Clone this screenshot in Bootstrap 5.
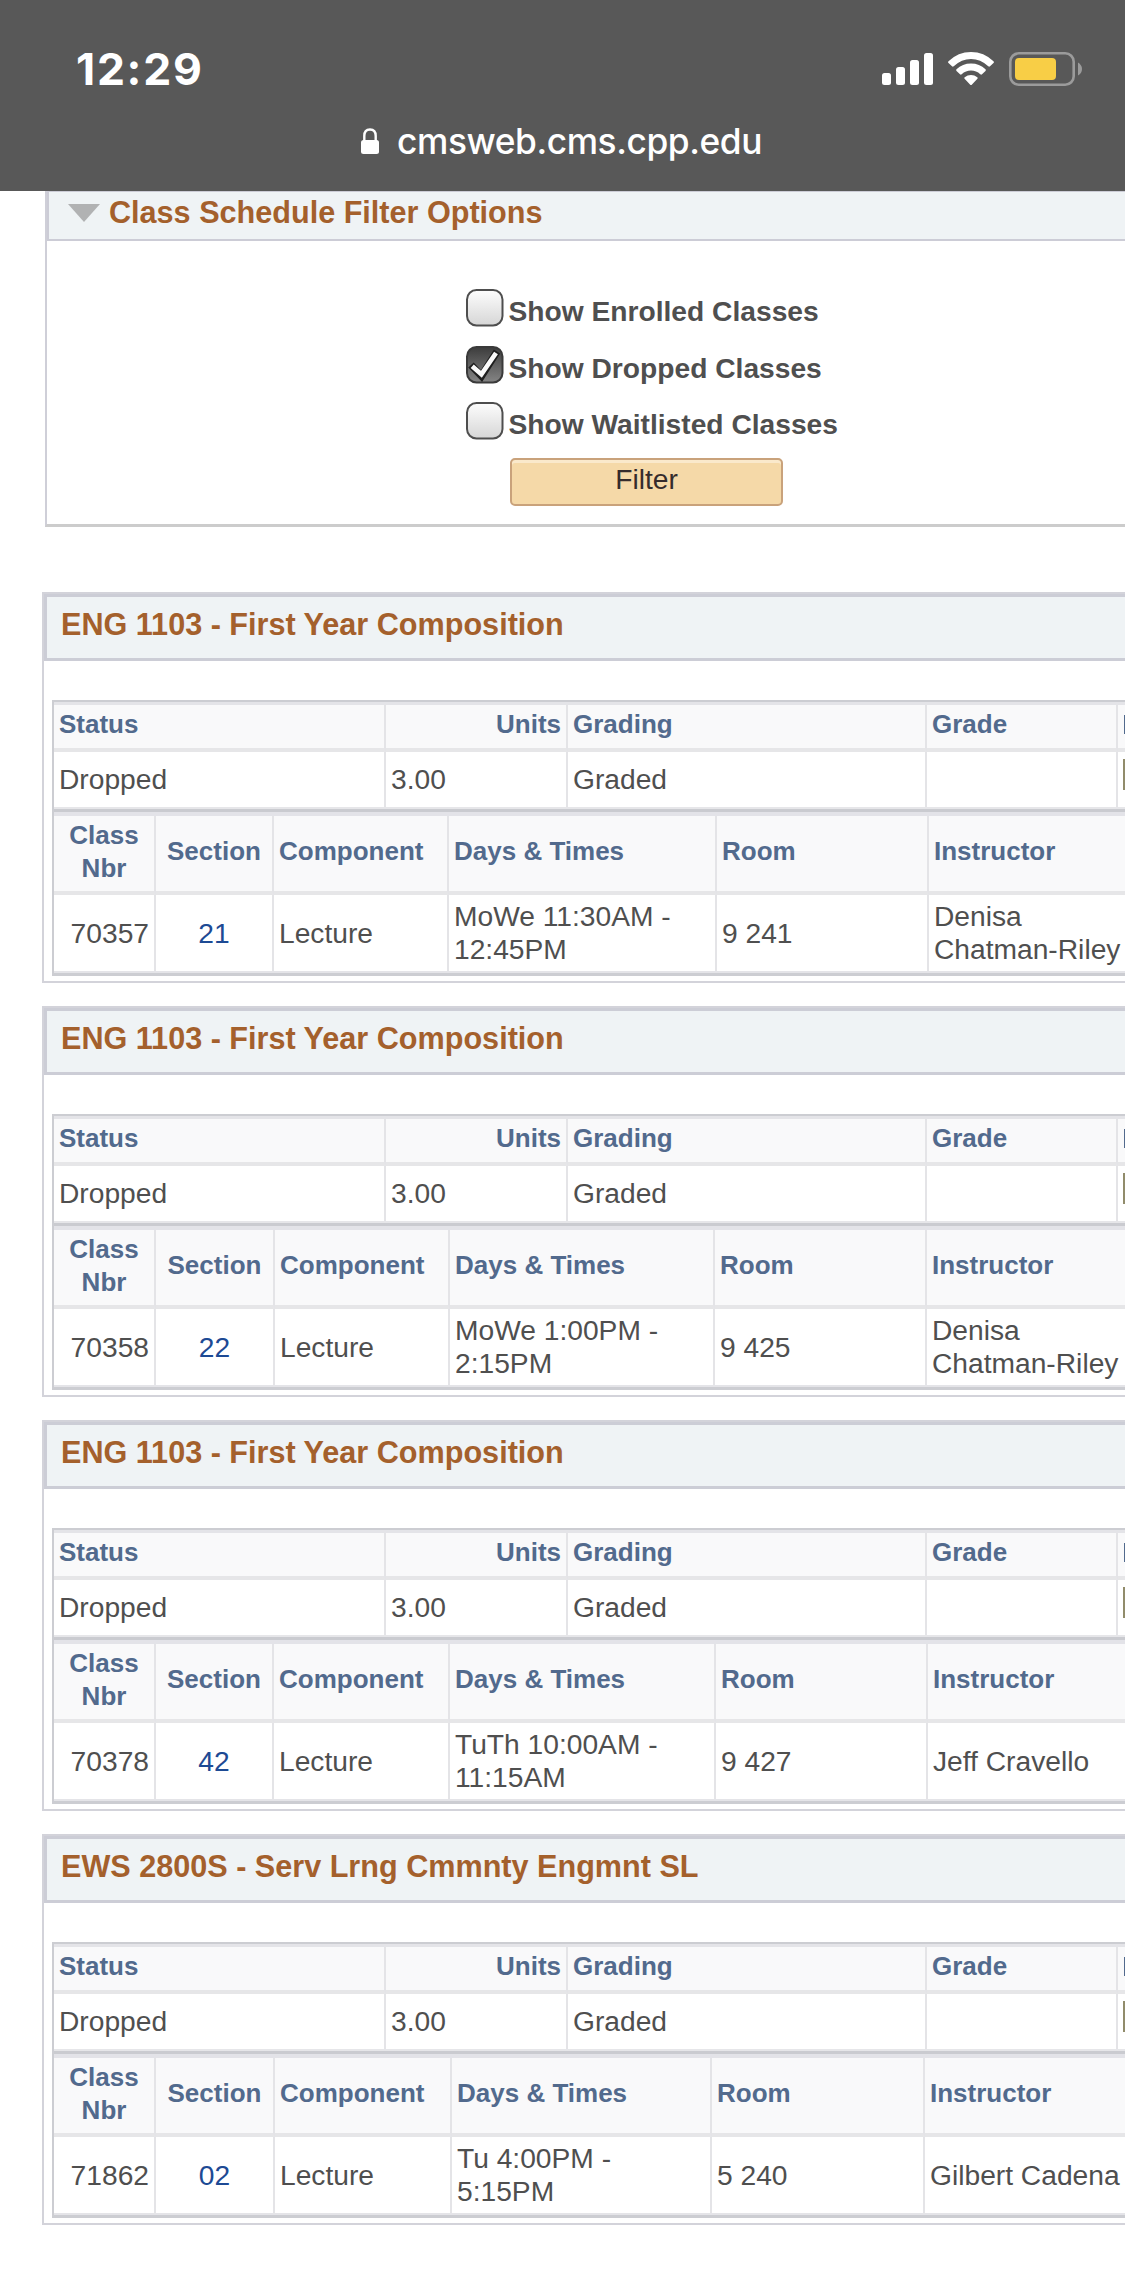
<!DOCTYPE html>
<html lang="en">
<head>
<meta charset="utf-8">
<meta name="viewport" content="width=device-width, initial-scale=1">
<title>Class Schedule</title>
<link href="https://cdn.jsdelivr.net/npm/bootstrap@5.3.0/dist/css/bootstrap.min.css" rel="stylesheet">
<style>
body{font-family:"Liberation Sans",Arial,sans-serif;font-size:28.2px;line-height:33px;color:#4f4f4f;overflow:hidden;height:2275px}
.phone-top{height:191px;background:#585858;font-family:Inter,sans-serif;color:#fff}
.top-row{height:102px;padding:36px 43px 0 76px}
.clock{font-size:44.5px;font-weight:700;line-height:50px;letter-spacing:1.7px}
.url-row{height:78px;font-size:35.3px;font-weight:500;line-height:44px;padding-left:361px}
.url-row span{margin:2px 0 0 17px;letter-spacing:-.42px}
.brown{color:#a4602c;font-weight:700;font-size:30.6px;line-height:36px}
.filter-panel{margin:0 0 65px 45px;height:336px;border-left:2px solid #cfcfd8;border-bottom:3px solid #ccc}
.filter-head{height:50px;background:#eff3f5;border:solid #ccccd6;border-width:1px 0 2px 2px;padding:2px 0 0 19px}
.filter-head svg{margin:10px 9px 0 0}
.filter-body{padding:48px 0 0 419px}
.opt{height:56.5px;gap:4.500px;font-weight:700;font-size:28.2px}
.opt label{padding-top:6px}
.box{width:38px;height:38px;flex:none}
.btn-filter{display:block;width:273px;height:48px;margin:-1px 0 0 44px;padding:0 0 6px;border:2px solid #c9a27b;border-radius:5px;background:#f5d9a8;box-shadow:inset 0 3px 0 #fae9cb;color:#352c2c;font-size:28.2px;line-height:32px;text-align:center}
.course{margin:0 0 23px 42px;height:391px;border:solid #d3d3da;border-width:2px 0 2px 2px;overflow:hidden}
.course-head{height:67px;background:#eff3f5;border:solid #cccdd6;border-width:3px 0 3px 3px;padding:9px 0 0 14px}
.grids{margin:39px 0 0 8px;border:solid #cccdd2;border-width:2px 0 3px 2px}
.grid-t{width:1071px;table-layout:fixed;border-collapse:separate;border-spacing:0}
.grid-t th{background:#f9f9fa;color:#526a8d;font-size:26px;font-weight:700;border-bottom:4px solid #e6e6e8}
.grid-t th,.grid-t td{border-right:2px solid #e4e4e7;padding:0 5px;vertical-align:middle;line-height:33px}
.grid-t th:last-child,.grid-t td:last-child{border-right:0;padding-right:0;white-space:nowrap}
.grid-t th:first-child,.grid-t td:first-child{padding-left:5px}
.t-status{border-top:3px solid #e4e4e8;border-bottom:2px solid #e6e6e9}
.t-status th{height:47px;padding-bottom:4px}
.t-status td{height:55px}
.t-class{border-top:4px solid #e3e3e8;border-bottom:2px solid #e4e4e8}
.t-class th{height:79px;padding-bottom:4px}
.t-class td{height:76px}
.rule{height:3px;background:#cacbd0}
.sec-link{color:#1d4a94;text-decoration:none}
.stem{width:4px;height:19px;margin-left:1px;background:#526a8d}
.deadline{width:30px;height:31px;border:2px solid #918c6b;background:#f1eed8;margin-top:-10px}
</style>
<script src="https://cdn.jsdelivr.net/npm/bootstrap@5.3.0/dist/js/bootstrap.bundle.min.js"></script>
</head>
<body class="bg-white">
<header class="phone-top">
  <div class="top-row d-flex justify-content-between align-items-center">
    <div class="clock">12:29</div>
    <div class="d-flex align-items-center">
      <svg width="51" height="34" viewBox="0 0 51 34" fill="#fff"><rect y="21" width="9" height="12" rx="2.5"/><rect x="14" y="15" width="9" height="18" rx="2.5"/><rect x="28" y="8" width="9" height="25" rx="2.5"/><rect x="42" y="1" width="9" height="32" rx="2.5"/></svg>
      <svg style="margin-left:15px" width="46" height="34" viewBox="0 0 46 34" fill="#fff"><path d="M23 0Q36 0 45.5 9.3Q46.3 10.2 45.5 11L42 14.3Q41.200 15 40.300 14.300Q32.500 7 23 7T5.700 14.300Q4.800 15 4 14.300L.5 11Q-.3 10.200.5 9.300Q10 0 23 0Z"/><path d="M23 11.500Q31.500 11.500 37.500 17.200Q38.300 18 37.500 18.900L34 22.300Q33.200 23 32.300 22.300Q28.300 18.600 23 18.600T13.700 22.300Q12.800 23 12 22.300L8.500 18.900Q7.700 18 8.500 17.200Q14.500 11.500 23 11.500Z"/><path d="M23 23Q26.500 23 29.300 25.200Q30.200 26 29.400 26.800L24 32.400Q23 33.500 22 32.400L16.600 26.800Q15.800 26 16.700 25.200Q19.500 23 23 23Z"/></svg>
      <svg style="margin-left:15px" width="73" height="34" viewBox="0 0 73 34"><rect x="1.300" y="1.300" width="63.400" height="31.400" rx="8.500" fill="none" stroke="#9b9b9b" stroke-width="2.600"/><rect x="6" y="6" width="41" height="22" rx="4" fill="#f8ce46"/><path d="M69 10.500Q73 13 73 17T69 23.500Z" fill="#9b9b9b"/></svg>
    </div>
  </div>
  <div class="url-row d-flex align-items-center">
    <svg width="19" height="27" viewBox="0 0 19 27"><rect y="12" width="18" height="14" rx="2.500" fill="#fff"/><path d="M3.300 13V8Q3.300 1.500 9 1.500T14.700 8V13" fill="none" stroke="#fff" stroke-width="2.400"/></svg>
    <span>cmsweb.cms.cpp.edu</span>
  </div>
</header>

<section class="filter-panel">
  <div class="filter-head d-flex align-items-start">
    <svg width="32" height="19" viewBox="0 0 32 19"><path d="M0 0H32L16 18Z" fill="#b1b2b3"/></svg>
    <div class="brown">Class Schedule Filter Options</div>
  </div>
  <div class="filter-body">
    <div class="opt d-flex align-items-start">
      <svg class="box" viewBox="0 0 38 38"><defs><linearGradient id="g1" x2="0" y2="1"><stop stop-color="#fdfdfd"/><stop offset="1" stop-color="#d6d6d6"/></linearGradient><linearGradient id="g2" x2="0" y2="1"><stop stop-color="#3c3c3c"/><stop offset="1" stop-color="#858585"/></linearGradient></defs><rect x="1" y="1" width="35.500" height="35.500" rx="9.500" fill="url(#g1)" stroke="#4e4e4e" stroke-width="2"/></svg>
      <label>Show Enrolled Classes</label>
    </div>
    <div class="opt d-flex align-items-start">
      <svg class="box" viewBox="0 0 38 38"><rect x="1" y="1" width="35.500" height="35.500" rx="9.500" fill="url(#g2)" stroke="#3a3a3a" stroke-width="2"/><path d="M5 19L15.500 30L31 5.500" fill="none" stroke="#1e1e1e" stroke-width="7.500"/><path d="M6.200 20.200L15.400 28.300L30 7" fill="none" stroke="#fafafa" stroke-width="4.600"/></svg>
      <label>Show Dropped Classes</label>
    </div>
    <div class="opt d-flex align-items-start">
      <svg class="box" viewBox="0 0 38 38"><rect x="1" y="1" width="35.500" height="35.500" rx="9.500" fill="url(#g1)" stroke="#4e4e4e" stroke-width="2"/></svg>
      <label>Show Waitlisted Classes</label>
    </div>
    <button class="btn-filter" type="button">Filter</button>
  </div>
</section>

<section class="course">
  <div class="course-head brown">ENG 1103 - First Year Composition</div>
  <div class="grids">
    <table class="grid-t t-status"><colgroup><col width="332"><col width="182"><col width="359"><col width="191"><col></colgroup>
      <tr><th>Status</th><th class="text-end">Units</th><th>Grading</th><th>Grade</th><th><div class="stem"></div></th></tr>
      <tr><td>Dropped</td><td>3.00</td><td>Graded</td><td></td><td><div class="deadline"></div></td></tr>
    </table>
    <div class="rule"></div>
    <table class="grid-t t-class"><colgroup><col width="102"><col width="118"><col width="175"><col width="268"><col width="212"><col></colgroup>
      <tr><th class="text-center">Class<br>Nbr</th><th class="text-center">Section</th><th>Component</th><th>Days &amp; Times</th><th>Room</th><th>Instructor</th></tr>
      <tr><td class="text-end">70357</td><td class="text-center"><a class="sec-link" href="#">21</a></td><td>Lecture</td><td>MoWe 11:30AM -<br>12:45PM</td><td>9 241</td><td>Denisa<br>Chatman-Riley</td></tr>
    </table>
  </div>
</section>

<section class="course">
  <div class="course-head brown">ENG 1103 - First Year Composition</div>
  <div class="grids">
    <table class="grid-t t-status"><colgroup><col width="332"><col width="182"><col width="359"><col width="191"><col></colgroup>
      <tr><th>Status</th><th class="text-end">Units</th><th>Grading</th><th>Grade</th><th><div class="stem"></div></th></tr>
      <tr><td>Dropped</td><td>3.00</td><td>Graded</td><td></td><td><div class="deadline"></div></td></tr>
    </table>
    <div class="rule"></div>
    <table class="grid-t t-class"><colgroup><col width="102"><col width="119"><col width="175"><col width="265"><col width="212"><col></colgroup>
      <tr><th class="text-center">Class<br>Nbr</th><th class="text-center">Section</th><th>Component</th><th>Days &amp; Times</th><th>Room</th><th>Instructor</th></tr>
      <tr><td class="text-end">70358</td><td class="text-center"><a class="sec-link" href="#">22</a></td><td>Lecture</td><td>MoWe 1:00PM -<br>2:15PM</td><td>9 425</td><td>Denisa<br>Chatman-Riley</td></tr>
    </table>
  </div>
</section>

<section class="course">
  <div class="course-head brown">ENG 1103 - First Year Composition</div>
  <div class="grids">
    <table class="grid-t t-status"><colgroup><col width="332"><col width="182"><col width="359"><col width="191"><col></colgroup>
      <tr><th>Status</th><th class="text-end">Units</th><th>Grading</th><th>Grade</th><th><div class="stem"></div></th></tr>
      <tr><td>Dropped</td><td>3.00</td><td>Graded</td><td></td><td><div class="deadline"></div></td></tr>
    </table>
    <div class="rule"></div>
    <table class="grid-t t-class"><colgroup><col width="102"><col width="118"><col width="176"><col width="266"><col width="212"><col></colgroup>
      <tr><th class="text-center">Class<br>Nbr</th><th class="text-center">Section</th><th>Component</th><th>Days &amp; Times</th><th>Room</th><th>Instructor</th></tr>
      <tr><td class="text-end">70378</td><td class="text-center"><a class="sec-link" href="#">42</a></td><td>Lecture</td><td>TuTh 10:00AM -<br>11:15AM</td><td>9 427</td><td>Jeff Cravello</td></tr>
    </table>
  </div>
</section>

<section class="course">
  <div class="course-head brown">EWS 2800S - Serv Lrng Cmmnty Engmnt SL</div>
  <div class="grids">
    <table class="grid-t t-status"><colgroup><col width="332"><col width="182"><col width="359"><col width="191"><col></colgroup>
      <tr><th>Status</th><th class="text-end">Units</th><th>Grading</th><th>Grade</th><th><div class="stem"></div></th></tr>
      <tr><td>Dropped</td><td>3.00</td><td>Graded</td><td></td><td><div class="deadline"></div></td></tr>
    </table>
    <div class="rule"></div>
    <table class="grid-t t-class"><colgroup><col width="102"><col width="119"><col width="177"><col width="260"><col width="213"><col></colgroup>
      <tr><th class="text-center">Class<br>Nbr</th><th class="text-center">Section</th><th>Component</th><th>Days &amp; Times</th><th>Room</th><th>Instructor</th></tr>
      <tr><td class="text-end">71862</td><td class="text-center"><a class="sec-link" href="#">02</a></td><td>Lecture</td><td>Tu 4:00PM -<br>5:15PM</td><td>5 240</td><td>Gilbert Cadena</td></tr>
    </table>
  </div>
</section>
</body>
</html>
